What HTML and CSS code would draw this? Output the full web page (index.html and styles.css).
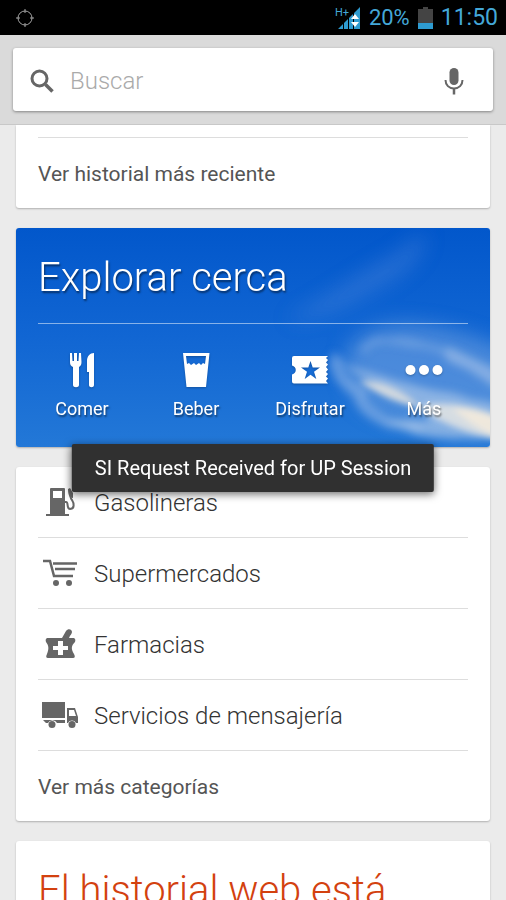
FILE: index.html
```html
<!DOCTYPE html>
<html lang="es">
<head>
<meta charset="utf-8">
<meta name="viewport" content="width=device-width, initial-scale=1">
<title>Buscar</title>
<link rel="stylesheet" href="styles.css">
</head>
<body>
<header class="status">
  <svg class="gps" width="20" height="20" viewBox="0 0 20 20" fill="none" stroke="#a5a5a5" aria-hidden="true"><circle cx="10" cy="10" r="7"/><path d="M10 1v4M10 15v4M1 10h4M15 10h4"/></svg>
  <div class="status-right">
    <svg class="signal" width="26" height="24" viewBox="0 0 26 24" aria-hidden="true">
      <path fill="#2e9bd0" d="M3 23l5-5v5zM9 17l4-4v10H9zM14 12l4-4v15h-4zM19 7l6-6v22h-6z"/>
      <path fill="#fff" d="M20 8l4 5h-8zM16 16h8l-4 5z"/>
      <text x="0" y="10">H+</text>
    </svg>
    <span class="percent">20%</span>
    <svg class="battery" width="15" height="22" viewBox="0 0 15 22" aria-hidden="true"><path fill="#444" d="M5 0h5v2h5v14H0V2h5z"/><path fill="#2e9bd0" d="M0 16h15v6H0z"/></svg>
    <time>11:50</time>
  </div>
</header>
<form class="search">
  <div class="search-box">
    <svg width="24" height="24" viewBox="0 0 24 24" fill="none" stroke="#666" aria-hidden="true"><circle cx="9.500" cy="9.500" r="7.500" stroke-width="3"/><path stroke-width="3.500" d="M15.500 15.500l7 7"/></svg>
    <input type="text" placeholder="Buscar" aria-label="Buscar">
    <button type="button" aria-label="Búsqueda por voz">
      <svg width="20" height="28" viewBox="0 0 20 28" fill="none" stroke="#666" aria-hidden="true"><rect x="5.500" y="1" width="9" height="17" rx="4.500" fill="#666" stroke="none"/><path stroke-width="2" d="M1.500 13c0 5 3.500 8.500 8.500 8.500s8.500-3.500 8.500-8.500"/><path stroke-width="2.500" d="M10 21v6.500"/></svg>
    </button>
  </div>
</form>
<main class="feed">
  <section class="card recent">
    <a class="more" href="#">Ver historial más reciente</a>
  </section>
  <section class="card explore">
    <svg class="sky" viewBox="0 0 474 219" preserveAspectRatio="none" aria-hidden="true">
      <defs>
        <linearGradient id="blue" x1="0" y1="0" x2="0" y2="1"><stop offset="0" stop-color="#0257cb"/><stop offset=".5" stop-color="#1166d3"/><stop offset="1" stop-color="#2378d7"/></linearGradient>
        <filter id="soft" x="-30%" y="-30%" width="160%" height="160%"><feGaussianBlur stdDeviation="10"/></filter>
        <filter id="fine" x="-30%" y="-30%" width="160%" height="160%"><feTurbulence type="fractalNoise" baseFrequency=".03 .05" numOctaves="3" seed="8" result="n"/><feDisplacementMap in="SourceGraphic" in2="n" scale="8"/><feGaussianBlur stdDeviation="4"/></filter>
        <filter id="edge" x="-30%" y="-30%" width="160%" height="160%"><feGaussianBlur stdDeviation="3"/></filter>
      </defs>
      <path fill="url(#blue)" d="M0 0h474v219H0z"/>
      <g filter="url(#soft)">
        <path fill="#7fa9e2" opacity=".5" d="M345 108c30-22 92-12 150 16v82c-42 4-116-6-150-30-16-20-26-50 0-68z"/>
        <path fill="#6f9ce0" opacity=".3" d="M270 92c40-20 80-50 112-66 12-10 20-20 28-20-2 26-28 44-50 54-28 16-56 32-90 32z"/>
      </g>
      <g filter="url(#fine)">
        <path fill="none" stroke="#9dbde9" stroke-width="12" opacity=".5" d="M322 128c-8 12 6 28 22 36 0 20 26 32 60 36"/>
        <path fill="#b4cbea" opacity=".6" d="M324 134c22 10 34 10 60 20 30 8 70 14 110 26v30c-58 4-90 0-130-18 30 2 46 0 50-6-20-20-60-26-90-52z"/>
        <path fill="#b4cae9" opacity=".45" d="M430 118c26 10 46 20 66 32v24c-20-18-40-30-66-42z"/>
        <path fill="none" stroke="#9bbbe8" stroke-width="7" opacity=".4" d="M345 122c20-14 40-10 62-4 28 6 50 18 80 38"/>
      </g>
      <g filter="url(#edge)">
        <path fill="#eee9de" opacity=".8" d="M344 153c20-2 42 8 62 26-24-3-44-12-62-26z"/>
        <path fill="#e9e7e2" opacity=".8" d="M400 178c30-6 62 0 90 14v20c-34-4-64-16-90-34z"/>
        <path fill="#fbeeda" opacity=".7" d="M436 180c20 0 36 4 54 14v20c-20-8-38-20-54-34z"/>
      </g>
    </svg>
    <div class="explore-body">
      <h2>Explorar cerca</h2>
      <nav class="places">
        <a href="#">
          <svg width="40" height="36" viewBox="0 0 40 36" fill="#fff" aria-hidden="true"><path d="M8 1h2l.5 8H12V1h3v8h1.500L17 1h2l.5 9c0 3-1 4-2.500 5v18c0 3-6 3-6 0V15c-2-1-3-2-3-5zM32 1v32c0 3-5 3-5 0V20h-2V9c0-5 3-8 7-8z"/></svg>
          <span>Comer</span>
        </a>
        <a href="#">
          <svg width="40" height="36" viewBox="0 0 40 36" aria-hidden="true"><path fill="#fff" fill-rule="evenodd" d="M7 1h26.500L30 35H10.500zM10 4l1 8 2-1 2 2 3-2 2 2 3-2 2 2 2-2 2 1 1-8z"/></svg>
          <span>Beber</span>
        </a>
        <a href="#">
          <svg width="40" height="36" viewBox="0 0 40 36" aria-hidden="true"><path fill="#fff" fill-rule="evenodd" d="M4 4h34l-2 2 2 2-2 2.500 2 2-2 2.500 2 2.500-2 2.500 2 2-2 2.500 2 2-2 2.500 2 2.500H4q-2 0-2-2v-7c5-1 5-8 0-9V6q0-2 2-2zM20.500 9l-2.200 6.500H11l6 4.200-2.300 7.300 5.800-4.300 5.800 4.300-2.300-7.300 6-4.200h-7.300z"/></svg>
          <span>Disfrutar</span>
        </a>
        <a href="#">
          <svg width="40" height="36" viewBox="0 0 40 36" fill="#fff" aria-hidden="true"><circle cx="6.500" cy="18" r="5"/><circle cx="20" cy="18" r="5"/><circle cx="33.500" cy="18" r="5"/></svg>
          <span>Más</span>
        </a>
      </nav>
    </div>
  </section>
  <section class="card">
    <ul class="list">
      <li><a href="#"><svg width="36" height="36" viewBox="0 0 36 36" aria-hidden="true"><path fill="#666" fill-rule="evenodd" d="M8 4q0-1 1-1h13q1 0 1 1v25h4v2H4v-2h4zM11 6v7h9V6z"/><path fill="none" stroke="#666" stroke-width="2" d="M23 17h1c3 0 0 7 4 7 5 0 4-6 2-9-2-2-2-5-2-8"/><path fill="#666" d="M26 4l2-1 3 5v5c-4 0-5-4-5-9z"/></svg>Gasolineras</a></li>
      <li><a href="#"><svg width="36" height="36" viewBox="0 0 36 36" aria-hidden="true"><path fill="none" stroke="#666" stroke-width="2.500" d="M1 5h7l4 15h19M11 7.500h24M13 13h20"/><circle cx="14" cy="27" r="3" fill="#666"/><circle cx="27" cy="27" r="3" fill="#666"/></svg>Supermercados</a></li>
      <li><a href="#"><svg width="36" height="36" viewBox="0 0 36 36" fill="#666" aria-hidden="true"><path d="M20 11l4-7c2-3 6-2 6 1 0 2-2 3-3 6z"/><path fill-rule="evenodd" d="M5 11h27q2 1 1 4c-4 4-4 7-1 12q2 4-1 4H6q-3 0-1-4c2-5 2-8-1-12q-1-3 1-4zM16 14v5h-5v4h5v5h5v-5h5v-4h-5v-5z"/></svg>Farmacias</a></li>
      <li><a href="#"><svg width="36" height="36" viewBox="0 0 36 36" fill="#666" aria-hidden="true"><path d="M0 4h23v16H0zM1 22h22v3h-8a5 5 0 0 0-9 0H4z"/><path fill-rule="evenodd" d="M25 10h8l3 9v6h-2a4.500 4.500 0 0 0-8 0h-1zM27 12v6h7l-2-6z"/><circle cx="10" cy="26.500" r="3.500"/><circle cx="30" cy="26.500" r="3.500"/></svg>Servicios de mensajería</a></li>
    </ul>
    <a class="more" href="#">Ver más categorías</a>
  </section>
  <section class="card history">
    <h2>El historial web está</h2>
  </section>
</main>
<div class="toast" role="status">SI Request Received for UP Session</div>
</body>
</html>
```
FILE: styles.css
```css
* {
  box-sizing: border-box;
}

body {
  display: flex;
  flex-direction: column;
  height: 100vh;
  margin: 0;
  overflow: hidden;
  background: #ebebeb;
  color: #333;
  font-family: Roboto, "Liberation Sans", sans-serif;
}

a {
  color: inherit;
  text-decoration: none;
}

svg {
  display: block;
  flex: none;
}

.status {
  display: flex;
  flex: none;
  align-items: center;
  justify-content: space-between;
  height: 35px;
  padding: 0 8px 0 15px;
  background: #000;
  color: #44a8d8;
}

.status-right {
  display: flex;
  align-items: center;
  gap: 8px;
}

.percent {
  font-size: 22px;
}

.status time {
  font-size: 23px;
}

.signal text {
  fill: #44a8d8;
  font-size: 11px;
}

.search {
  flex: none;
  margin: 0;
  padding: 13px;
  border-bottom: 1px solid #c8c8c8;
  background: #dadada;
}

.search-box {
  display: flex;
  align-items: center;
  gap: 16px;
  height: 63px;
  padding: 2px 29px 0 17px;
  border-radius: 3px;
  background: #fff;
  box-shadow: 0 1px 3px rgba(0, 0, 0, .4);
}

.search input {
  flex: 1;
  min-width: 0;
  padding: 0;
  border: 0;
  outline: 0;
  background: none;
  font: 300 24px/32px Roboto, "Liberation Sans", sans-serif;
}

.search input::placeholder {
  color: #aaa;
}

.search button {
  padding: 0;
  border: 0;
  background: none;
}

.feed {
  display: flex;
  flex: 1;
  flex-direction: column;
  gap: 20px;
  min-height: 0;
  padding: 0 16px;
  overflow: hidden;
}

.card {
  flex: none;
  padding: 0 22px;
  border-radius: 3px;
  background: #fff;
  box-shadow: 0 1px 2px rgba(0, 0, 0, .25);
}

.recent {
  padding-top: 12px;
  border-radius: 0 0 3px 3px;
}

.recent .more {
  border-top: 1px solid #ddd;
}

.more {
  display: block;
  padding-top: 2px;
  color: #555;
  font-size: 21px;
  line-height: 68px;
}

h2 {
  margin: 0;
  font-size: 40px;
  font-weight: 300;
  line-height: 48px;
}

.explore {
  position: relative;
  padding: 0;
  overflow: hidden;
  color: #fff;
  text-shadow: 1px 2px 2px rgba(0, 0, 0, .5);
}

.sky {
  position: absolute;
  inset: 0;
  width: 100%;
  height: 100%;
}

.explore-body {
  position: relative;
}

.explore h2 {
  margin: 0 22px;
  padding: 26px 0 21px;
  border-bottom: 1px solid rgba(255, 255, 255, .5);
}

.places {
  display: grid;
  grid-template-columns: repeat(4, 1fr);
  padding: 28px 9px 26px;
}

.places a {
  display: flex;
  flex-direction: column;
  align-items: center;
  gap: 9px;
  font-size: 18px;
  line-height: 24px;
}

.places svg {
  filter: drop-shadow(0 1px 1px rgba(0, 0, 0, .25));
}

.list {
  margin: 0;
  padding: 0;
  list-style: none;
}

.list a {
  display: flex;
  align-items: center;
  gap: 16px;
  padding: 2px 0 0 4px;
  border-bottom: 1px solid #ddd;
  font-size: 24px;
  font-weight: 300;
  line-height: 68px;
}

.history {
  padding-top: 26px;
  color: #d3410f;
}

.toast {
  position: fixed;
  top: 444px;
  left: 50%;
  padding: 0 23px;
  border-radius: 2px;
  background: #303030;
  box-shadow: 0 2px 8px rgba(0, 0, 0, .6);
  color: #fff;
  font-size: 20px;
  line-height: 48px;
  white-space: nowrap;
  transform: translateX(-50%);
}
```
